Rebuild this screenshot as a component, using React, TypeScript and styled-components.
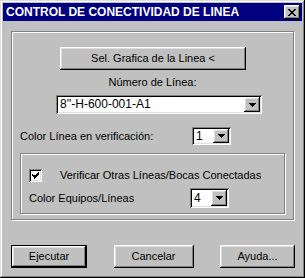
import React from "react";
import styled, { createGlobalStyle, css } from "styled-components";

const Global = createGlobalStyle`
  html, body { margin: 0; padding: 0; background: #c0c0c0; }
  body { font-family: "Liberation Sans", Arial, sans-serif; font-size: 11px; color: #000; }
  * { box-sizing: border-box; }
`;

const raised = css`
  box-shadow: inset -1px -1px #000, inset 1px 1px #fff, inset -2px -2px #808080, inset 2px 2px #dfdfdf;
`;

const sunken = css`
  box-shadow: inset 1px 1px #808080, inset -1px -1px #fff, inset 2px 2px #000, inset -2px -2px #dfdfdf;
`;

const Window = styled.div`
  width: 305px;
  height: 278px;
  background: #c0c0c0;
  padding: 3px;
  display: flex;
  flex-direction: column;
  box-shadow: inset -1px -1px #000, inset 1px 1px #dfdfdf, inset -2px -2px #808080, inset 2px 2px #fff;
`;

const TitleBar = styled.div`
  height: 18px;
  background: #000080;
  display: flex;
  align-items: center;
  justify-content: space-between;
  padding: 0 2px 0 3px;
`;

const Title = styled.span`
  color: #fff;
  font-weight: bold;
  font-size: 12px;
  line-height: 14px;
`;

const CloseButton = styled.div`
  width: 16px;
  height: 14px;
  background: #c0c0c0;
  ${raised};
  display: flex;
  align-items: center;
  justify-content: center;
`;

const Body = styled.div`
  padding: 10px 8px 0 8px;
  display: flex;
  flex-direction: column;
`;

const Group = styled.div<{ $w: number; $h: number }>`
  width: ${(p) => p.$w}px;
  height: ${(p) => p.$h}px;
  border: 1px solid #808080;
  box-shadow: inset 1px 1px #fff, 1px 1px #fff;
  display: flex;
  flex-direction: column;
`;

const Button = styled.div<{ $w: number; $default?: boolean }>`
  width: ${(p) => p.$w}px;
  height: 23px;
  background: #c0c0c0;
  display: flex;
  align-items: center;
  justify-content: center;
  line-height: 13px;
  ${(p) =>
    p.$default
      ? css`
          border: 1px solid #000;
          box-shadow: inset -1px -1px #000, inset 1px 1px #fff, inset -2px -2px #808080, inset 2px 2px #dfdfdf;
        `
      : raised};
`;

const SelButton = styled(Button)`
  margin: 15px 0 0 48px;
`;

const CenterLabel = styled.div`
  margin-top: 6px;
  text-align: center;
  line-height: 13px;
`;

const Combo = styled.div<{ $w: number; $h: number }>`
  width: ${(p) => p.$w}px;
  height: ${(p) => p.$h}px;
  background: #fff;
  ${sunken};
  padding: 2px;
  display: flex;
  align-items: stretch;
`;

const ComboText = styled.div<{ $size?: number }>`
  flex: 1;
  display: flex;
  align-items: center;
  padding-left: 2px;
  font-size: ${(p) => p.$size ?? 11}px;
  line-height: 13px;
`;

const ArrowBtn = styled.div`
  width: 16px;
  background: #c0c0c0;
  ${raised};
  display: flex;
  align-items: center;
  justify-content: center;
`;

const LineCombo = styled(Combo)`
  margin: 6px 0 0 44px;
`;

const Row = styled.div<{ $top: number; $left: number; $w: number }>`
  width: ${(p) => p.$w}px;
  display: flex;
  align-items: center;
  justify-content: space-between;
  margin: ${(p) => p.$top}px 0 0 ${(p) => p.$left}px;
`;

const RowLabel = styled.span`
  line-height: 13px;
`;

const InnerGroup = styled(Group)`
  margin: 8px 0 0 8px;
`;

const CheckRow = styled.div`
  display: flex;
  align-items: center;
  margin: 15px 0 0 8px;
`;

const CheckBox = styled.div`
  width: 13px;
  height: 13px;
  background: #fff;
  ${sunken};
  display: flex;
  align-items: center;
  justify-content: center;
`;

const CheckLabel = styled.span`
  margin-left: 18px;
  line-height: 13px;
`;

const Footer = styled.div`
  display: flex;
  justify-content: space-between;
  padding: 25px 7px 0 8px;
`;

const Arrow = () => (
  <svg width="7" height="4" viewBox="0 0 7 4">
    <path d="M0 0h7v1H0zM1 1h5v1H1zM2 2h3v1H2zM3 3h1v1H3z" fill="#000" />
  </svg>
);

export default function App() {
  return (
    <>
      <Global />
      <Window>
        <TitleBar>
          <Title>CONTROL DE CONECTIVIDAD DE LINEA</Title>
          <CloseButton>
            <svg width="8" height="7" viewBox="0 0 8 7">
              <path
                d="M0 0h2v1H0zM6 0h2v1H6zM1 1h2v1H1zM5 1h2v1H5zM2 2h4v1H2zM3 3h2v1H3zM2 4h4v1H2zM1 5h2v1H1zM5 5h2v1H5zM0 6h2v1H0zM6 6h2v1H6z"
                fill="#000"
              />
            </svg>
          </CloseButton>
        </TitleBar>
        <Body>
          <Group $w={283} $h={189}>
            <SelButton $w={186}>Sel. Grafica de la Linea &lt;</SelButton>
            <CenterLabel>Número de Línea:</CenterLabel>
            <LineCombo $w={206} $h={19}>
              <ComboText $size={12}>8''-H-600-001-A1</ComboText>
              <ArrowBtn>
                <Arrow />
              </ArrowBtn>
            </LineCombo>
            <Row $top={13} $left={8} $w={211}>
              <RowLabel>Color Línea en verificación:</RowLabel>
              <Combo $w={39} $h={18}>
                <ComboText $size={12}>1</ComboText>
                <ArrowBtn>
                  <Arrow />
                </ArrowBtn>
              </Combo>
            </Row>
            <InnerGroup $w={265} $h={61}>
              <CheckRow>
                <CheckBox>
                  <svg width="7" height="7" viewBox="0 0 7 7">
                    <path
                      d="M6 0h1v1H6zM5 1h2v1H5zM4 2h3v1H4zM0 2h1v1H0zM0 3h1v1H0zM1 3h2v1H1zM3 3h3v1H3zM1 4h4v1H1zM2 5h2v1H2zM2 6h1v1H2z"
                      fill="#000"
                    />
                  </svg>
                </CheckBox>
                <CheckLabel>Verificar Otras Líneas/Bocas Conectadas</CheckLabel>
              </CheckRow>
              <Row $top={6} $left={8} $w={200}>
                <RowLabel>Color Equipos/Líneas</RowLabel>
                <Combo $w={39} $h={20}>
                  <ComboText $size={12}>4</ComboText>
                  <ArrowBtn>
                    <Arrow />
                  </ArrowBtn>
                </Combo>
              </Row>
            </InnerGroup>
          </Group>
        </Body>
        <Footer>
          <Button $w={76} $default>
            Ejecutar
          </Button>
          <Button $w={80}>Cancelar</Button>
          <Button $w={75}>Ayuda...</Button>
        </Footer>
      </Window>
    </>
  );
}
